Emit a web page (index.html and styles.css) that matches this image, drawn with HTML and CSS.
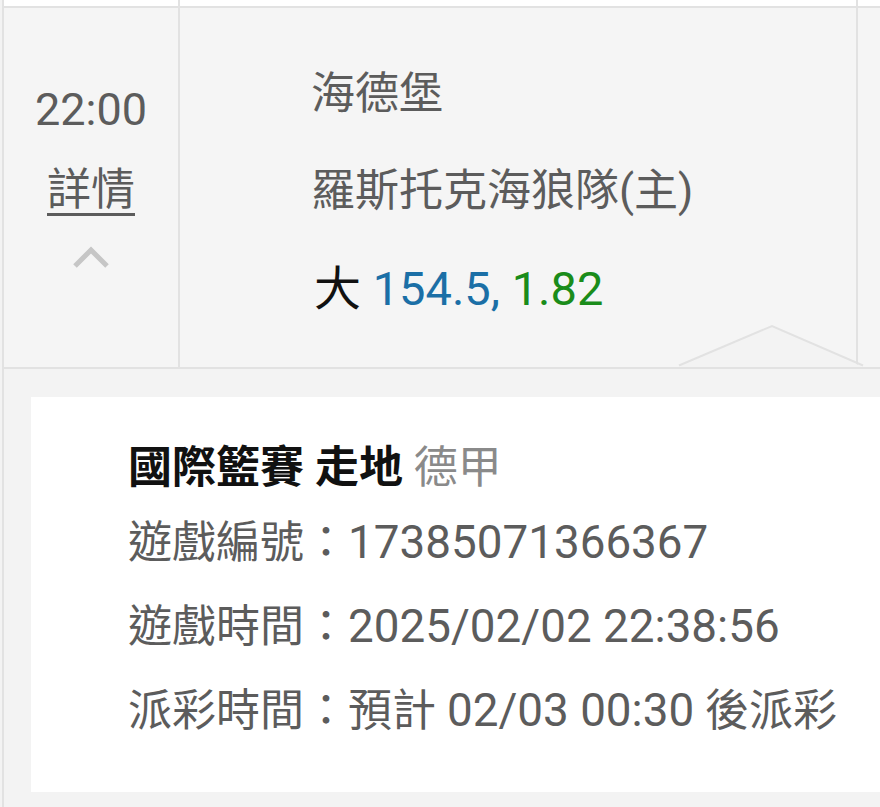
FILE: index.html
```html
<!DOCTYPE html>
<html lang="zh-Hant">
<head>
  <meta charset="UTF-8" />
  <meta name="viewport" content="width=device-width, initial-scale=1.0"/>
  <title>注單詳情</title>
  <link rel="stylesheet" href="styles.css">
</head>
<body>
  <div class="list">
    <div class="prev-row">
      <div class="cell time-cell"></div>
      <div class="cell match-cell"></div>
      <div class="cell side-cell"></div>
    </div>

    <div class="row">
      <div class="cell time-cell">
        <div class="time num">22:00</div>
        <a class="detail-link" href="#">詳情</a>
        <svg class="caret" width="38" height="24" viewBox="0 0 38 24">
          <polyline points="3,21 19,5 35,21" fill="none" stroke="#c6c6c6" stroke-width="5"/>
        </svg>
      </div>
      <div class="cell match-cell">
        <div class="line">海德堡</div>
        <div class="line">羅斯托克海狼隊(主)</div>
        <div class="line bet"><span class="pick">大</span> <span class="handicap">154.5,</span> <span class="odds">1.82</span></div>
      </div>
      <div class="cell side-cell"></div>

      <!-- arrow pointing up from the detail panel -->
      <svg class="notch" width="190" height="46" viewBox="0 0 190 46">
        <polygon points="2,44 95,3 186,44" fill="#f3f3f3"/>
        <polyline points="2,42.5 95,3 186,42.5" fill="none" stroke="#e2e2e2" stroke-width="2"/>
      </svg>
    </div>

    <div class="detail-panel">
      <div class="detail-card">
        <div class="detail-title"><b>國際籃賽 走地</b> <span class="league">德甲</span></div>
        <div class="detail-line">遊戲編號：<span class="num">17385071366367</span></div>
        <div class="detail-line">遊戲時間：<span class="num">2025/02/02 22:38:56</span></div>
        <div class="detail-line">派彩時間：預計 <span class="num">02/03 00:30</span> 後派彩</div>
      </div>
    </div>
  </div>
</body>
</html>
```

FILE: styles.css
```css
body {
  margin: 0;
  padding: 0;
  background: #f3f3f3;
  font-family: Roboto, "Noto Sans CJK TC", sans-serif;
  font-size: 44px;
  color: #5c5c5c;
  overflow: hidden;
}

.num {
  font-size: 45.8px;
}

.list {
  margin-left: 2px;
  border-left: 2px solid #e2e2e2;
  height: 807px;
}

.prev-row,
.row {
  display: grid;
  grid-template-columns: 176px 678px 1fr;
}

.prev-row {
  height: 6px;
  background: #fff;
}

.row {
  position: relative;
  height: 359px;
  background: #f5f5f5;
  border-top: 2px solid #e2e2e2;
  border-bottom: 2px solid #e2e2e2;
}

.time-cell,
.match-cell {
  border-right: 2px solid #e2e2e2;
}

.time-cell {
  display: flex;
  flex-direction: column;
  align-items: center;
  padding-top: 62px;
}

.time {
  line-height: 80px;
  font-size: 45px;
}

.detail-link {
  line-height: 80px;
  color: #5c5c5c;
  text-decoration: underline;
  text-decoration-thickness: 3px;
  text-underline-offset: 8px;
}

.caret {
  display: block;
  margin-top: 15px;
}

.match-cell {
  padding: 38px 0 0 131px;
}

.line {
  line-height: 97px;
  white-space: nowrap;
}

.bet {
  font-size: 47px;
  padding-left: 3px;
}

.bet .pick {
  color: #111;
}

.bet .handicap {
  color: #1b6fa6;
}

.bet .odds {
  color: #1a8c1a;
}

.notch {
  position: absolute;
  left: 673px;
  bottom: -2px;
}

.detail-panel {
  padding: 28px 0 15px 27px;
}

.detail-card {
  background: #fff;
  height: 395px;
  box-sizing: border-box;
  padding: 38px 0 0 97px;
}

.detail-title {
  line-height: 66px;
  color: #111;
}

.detail-title b {
  font-weight: 700;
}

.detail-title .league {
  color: #8a8a8a;
}

.detail-line {
  line-height: 83px;
  white-space: nowrap;
}
```
